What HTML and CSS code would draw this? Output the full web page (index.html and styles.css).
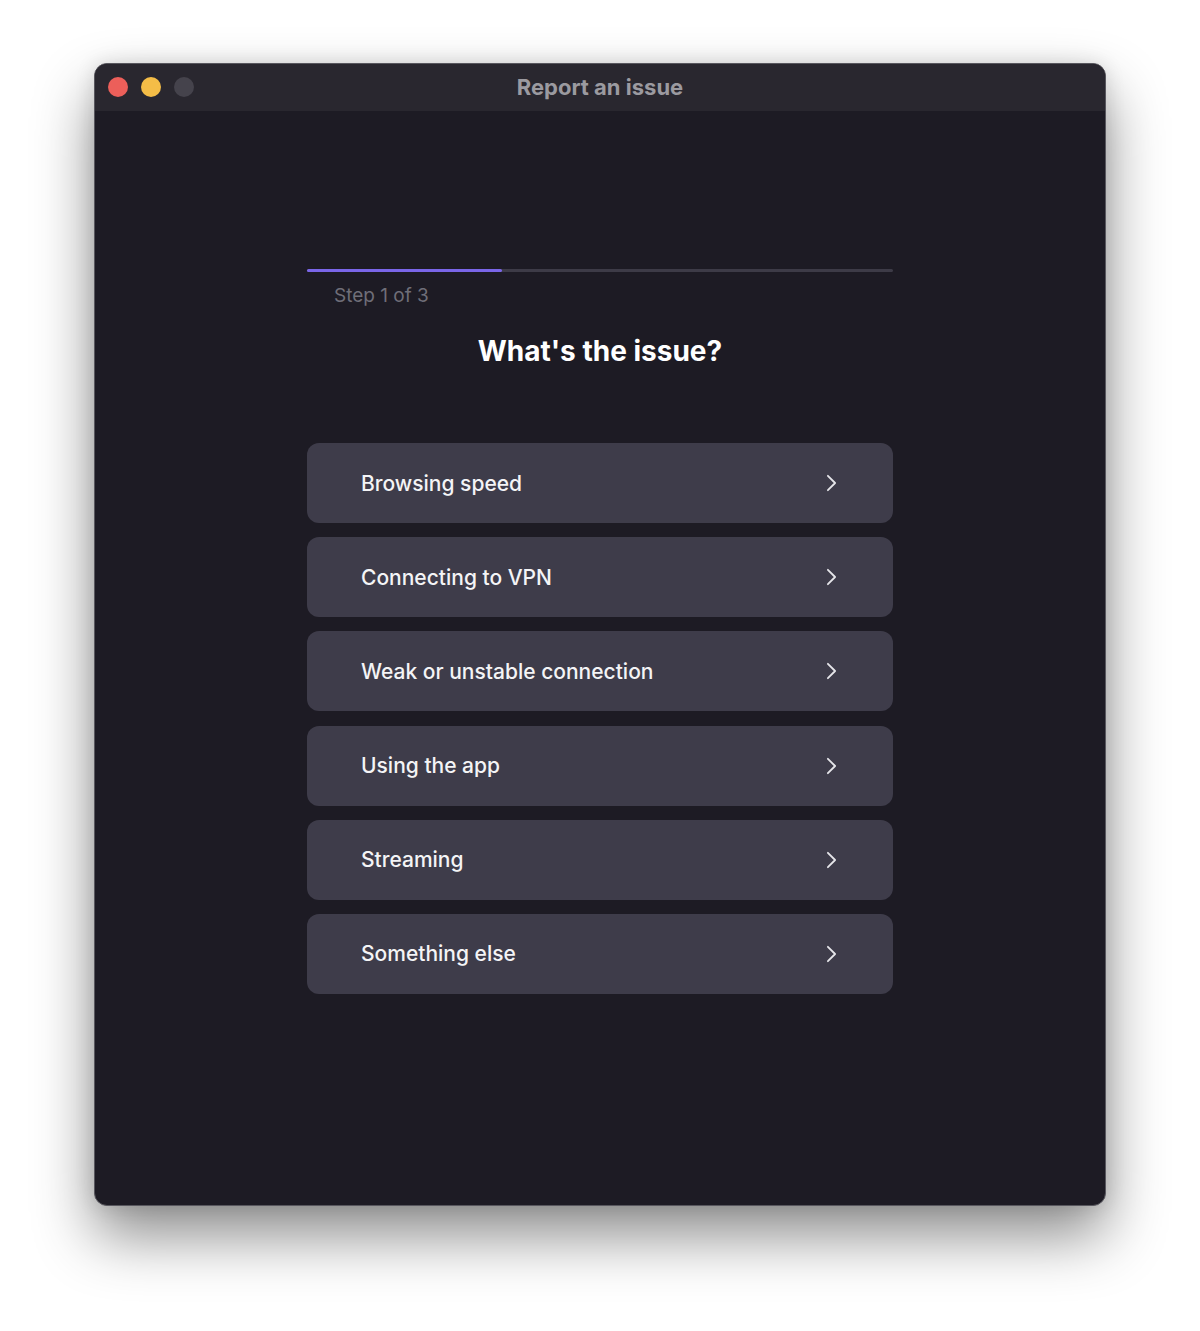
FILE: index.html
```html
<!DOCTYPE html>
<html lang="en">
<head>
<meta charset="UTF-8">
<meta name="viewport" content="width=device-width, initial-scale=1.0">
<title>Report an issue</title>
<link rel="stylesheet" href="styles.css">
</head>
<body>

<div class="window">
    <div class="titlebar">
        <div class="lights">
            <span class="light red"></span>
            <span class="light yellow"></span>
            <span class="light grey"></span>
        </div>
        <div class="title">Report an issue</div>
    </div>

    <div class="content">
        <div class="progress">
            <div class="progress-fill"></div>
        </div>
        <div class="step">Step 1 of 3</div>
        <h1>What's the issue?</h1>

        <div class="options">
            <button class="option">Browsing speed <svg viewBox="0 0 12 20"><path d="M2 2 L10 10 L2 18"/></svg></button>
            <button class="option">Connecting to VPN <svg viewBox="0 0 12 20"><path d="M2 2 L10 10 L2 18"/></svg></button>
            <button class="option">Weak or unstable connection <svg viewBox="0 0 12 20"><path d="M2 2 L10 10 L2 18"/></svg></button>
            <button class="option">Using the app <svg viewBox="0 0 12 20"><path d="M2 2 L10 10 L2 18"/></svg></button>
            <button class="option">Streaming <svg viewBox="0 0 12 20"><path d="M2 2 L10 10 L2 18"/></svg></button>
            <button class="option">Something else <svg viewBox="0 0 12 20"><path d="M2 2 L10 10 L2 18"/></svg></button>
        </div>
    </div>
</div>

</body>
</html>
```

FILE: styles.css
```css
html {
    background-color: #ffffff;
}
body {
    margin: 0;
    min-height: 1331px;
    box-sizing: border-box;
    font-family: Inter, "Noto Sans", sans-serif;
    padding: 63px 94px 0 94px;
}
.window {
    width: 1012px;
    height: 1143px;
    box-sizing: border-box;
    background-color: #1d1b24;
    border: 1px solid #58575e;
    border-radius: 13px;
    overflow: hidden;
    box-shadow: 0 30px 60px rgba(0, 0, 0, 0.45), 0 0 20px rgba(0, 0, 0, 0.12);
}
.titlebar {
    height: 47px;
    background-color: #29272f;
    display: flex;
    align-items: center;
    justify-content: center;
    position: relative;
}
.lights {
    position: absolute;
    left: 13px;
    top: 13px;
    display: flex;
    gap: 13px;
}
.light {
    width: 20px;
    height: 20px;
    border-radius: 50%;
}
.red { background-color: #ec5f5a; }
.yellow { background-color: #f4bd47; }
.grey { background-color: #45434c; }
.title {
    color: #9b9aa0;
    font-size: 22px;
    font-weight: 700;
    margin-top: -2px;
}
.content {
    width: 586px;
    margin: 0 auto;
    padding-top: 158px;
}
.progress {
    height: 3px;
    background-color: #3d3b47;
    border-radius: 2px;
}
.progress-fill {
    width: 195px;
    height: 3px;
    background-color: #7a66e8;
    border-radius: 2px;
}
.step {
    color: #6f6e78;
    font-size: 19px;
    margin: 12px 0 0 27px;
}
h1 {
    color: #ffffff;
    font-size: 28px;
    font-weight: 700;
    text-align: center;
    margin: 27px 0 0 0;
}
.options {
    margin-top: 75px;
    display: flex;
    flex-direction: column;
    gap: 14.2px;
}
.option {
    height: 80px;
    display: flex;
    align-items: center;
    justify-content: space-between;
    padding: 0 56px 0 54px;
    background-color: #3e3c4a;
    color: #f4f4f6;
    border: none;
    border-radius: 12px;
    font-family: Inter, "Noto Sans", sans-serif;
    font-size: 21px;
    font-weight: 500;
    cursor: pointer;
}
.option svg {
    width: 11px;
    height: 18px;
    fill: none;
    stroke: #e6e6ea;
    stroke-width: 2;
    stroke-linecap: round;
    stroke-linejoin: round;
}
```
